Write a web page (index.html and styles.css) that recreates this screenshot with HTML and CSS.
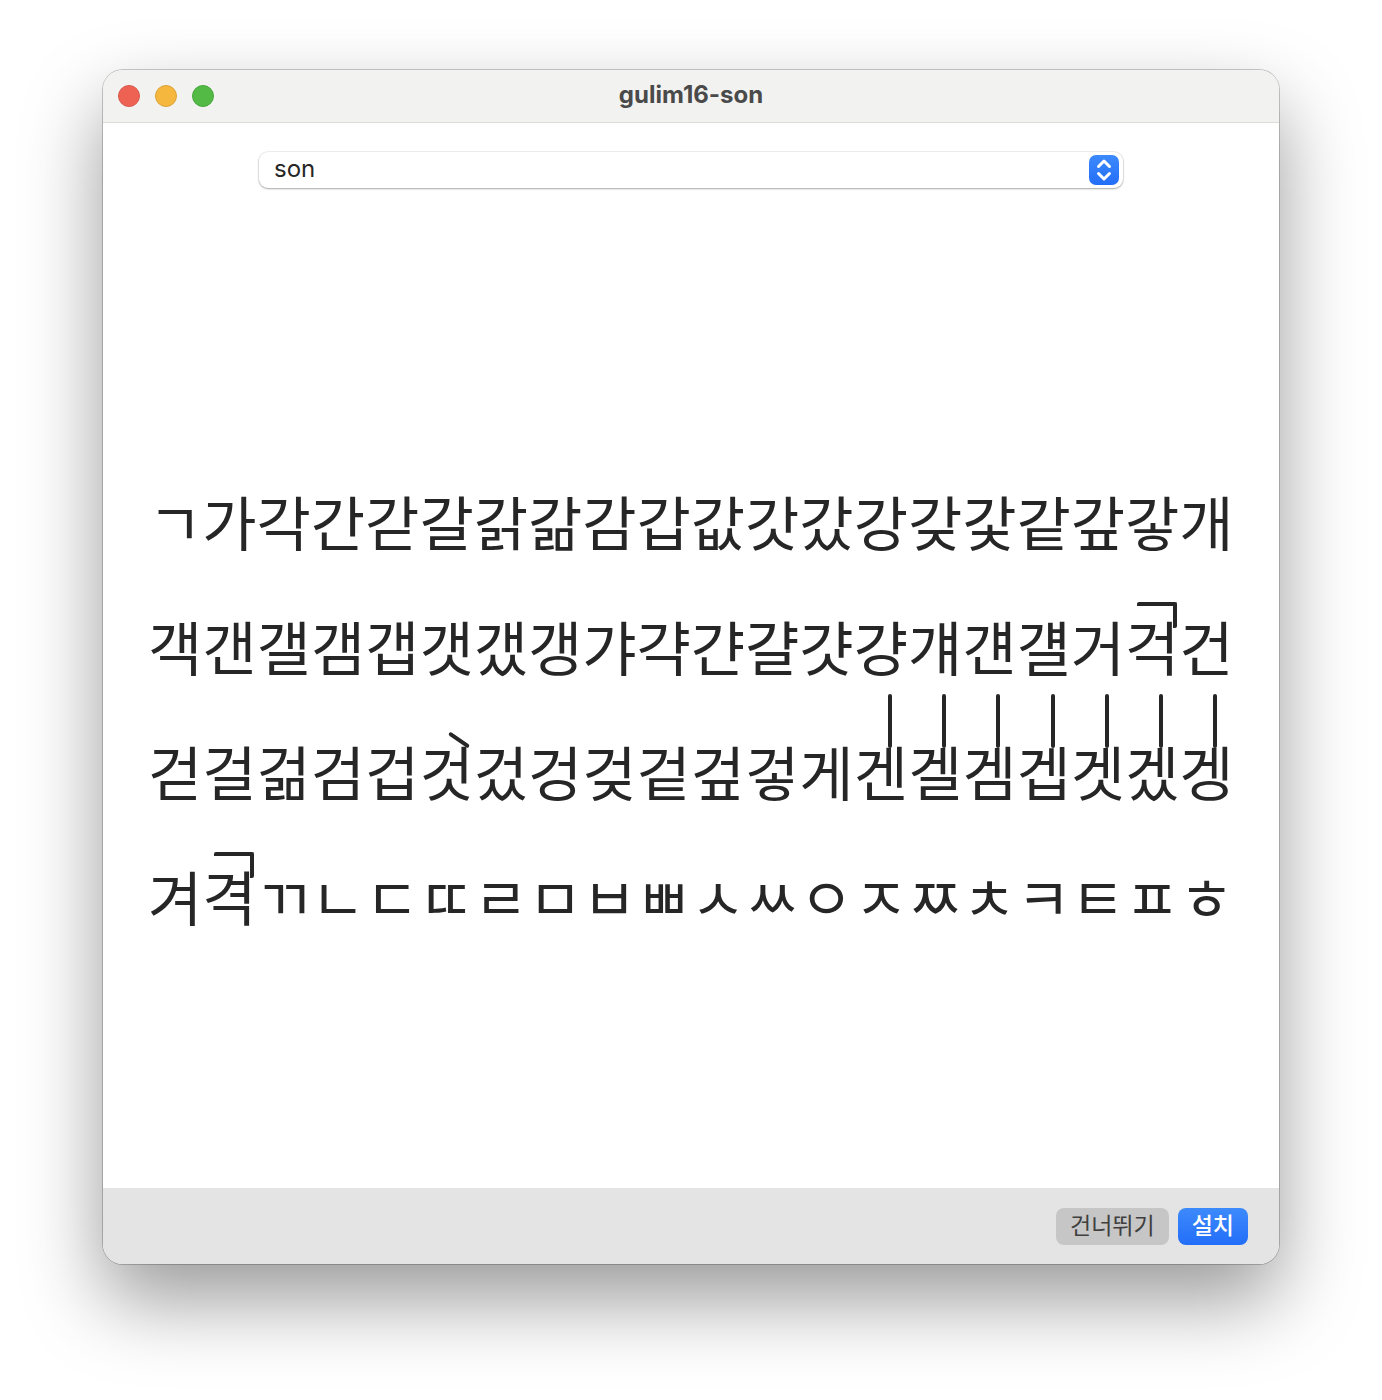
FILE: index.html
```html
<!DOCTYPE html>
<html lang="ko">
<head>
    <meta charset="UTF-8">
    <meta name="viewport" content="width=device-width, initial-scale=1.0">
    <title>gulim16-son</title>
    <link rel="stylesheet" href="styles.css">
</head>
<body>
    <div class="window">
        <header class="titlebar">
            <div class="lights">
                <button class="light close" aria-label="닫기"></button>
                <button class="light minimize" aria-label="최소화"></button>
                <button class="light zoom" aria-label="확대"></button>
            </div>
            <h1>gulim16-son</h1>
        </header>

        <main>
            <div class="picker">
                <select aria-label="서체 스타일">
                    <option>son</option>
                </select>
                <svg class="stepper" viewBox="0 0 30 30" aria-hidden="true">
                    <path d="M9.500 11.500L15 6L20.500 11.500M9.500 18.500L15 24L20.500 18.500"/>
                </svg>
            </div>

            <!-- Font sample, 20 glyphs per line -->
            <p class="sample">
                ㄱ가각간갇갈갉갊감갑값갓갔강갖갗같갚갛개<br>
                객갠갤갬갭갯갰갱갸갹갼걀걋걍걔걘걜거<span class="stray hook">걱</span>건<br>
                걷걸걺검겁<span class="stray tick">것</span>겄겅겆겉겊겋게<span class="stray stem">겐</span><span class="stray stem">겔</span><span class="stray stem">겜</span><span class="stray stem">겝</span><span class="stray stem">겟</span><span class="stray stem">겠</span><span class="stray stem">겡</span><br>
                겨<span class="stray hook">격</span>ㄲㄴㄷㄸㄹㅁㅂㅃㅅㅆㅇㅈㅉㅊㅋㅌㅍㅎ
            </p>
        </main>

        <footer>
            <button class="btn">건너뛰기</button>
            <button class="btn primary">설치</button>
        </footer>
    </div>
</body>
</html>
```
FILE: styles.css
```css
* {
    box-sizing: border-box;
}
body {
    margin: 0;
    min-height: 100vh;
    padding: 70px 103px 136px;
    display: flex;
    background: #fff;
    font-family: Inter, "Noto Sans CJK KR", sans-serif;
    color: #262626;
}
.window {
    flex: 1;
    min-width: 0;
    display: flex;
    flex-direction: column;
    overflow: hidden;
    border-radius: 20px;
    background: #fff;
    box-shadow: 0 0 0 1px rgba(0, 0, 0, 0.2), 0 36px 80px rgba(0, 0, 0, 0.4);
}

/* Title bar */
.titlebar {
    display: grid;
    grid-template-columns: 1fr auto 1fr;
    align-items: center;
    height: 53px;
    padding: 0 15px;
    background: #f2f2f0;
    border-bottom: 1px solid #dcdcda;
}
.titlebar h1 {
    margin: 0;
    padding-bottom: 2px;
    font-size: 24px;
    line-height: 30px;
    font-weight: 700;
    color: #4a4a4a;
}
.lights {
    display: flex;
    gap: 15px;
}
.light {
    width: 22px;
    height: 22px;
    padding: 0;
    border: 1px solid;
    border-radius: 50%;
}
.close {
    background: #ed6253;
    border-color: #d8584a;
}
.minimize {
    background: #f6b73e;
    border-color: #dba137;
}
.zoom {
    background: #53bb45;
    border-color: #47a53a;
}

/* Style drop-down */
main {
    flex: 1;
    display: flex;
    flex-direction: column;
    padding: 29px 43px 0;
}
.picker {
    position: relative;
    margin: 0 113px 40px;
}
.picker select {
    display: block;
    width: 100%;
    height: 36px;
    padding: 0 44px 3px 15px;
    appearance: none;
    border: 0;
    border-radius: 9px;
    background: #fff;
    box-shadow: 0 0 0 1px rgba(0, 0, 0, 0.06), 0 1px 2px rgba(0, 0, 0, 0.3);
    font-family: inherit;
    font-size: 24px;
    color: #262626;
}
.stepper {
    position: absolute;
    top: 3px;
    right: 4px;
    width: 30px;
    height: 30px;
    border-radius: 7px;
    background: linear-gradient(#3d8afc, #236ef8);
    fill: none;
    stroke: #fff;
    stroke-width: 3;
    stroke-linecap: round;
    stroke-linejoin: round;
    pointer-events: none;
}

/* Sample text */
.sample {
    margin: auto 0;
    padding: 0 2px;
    font-family: "Noto Sans CJK KR", sans-serif;
    font-size: 59px;
    line-height: 125px;
    white-space: nowrap;
}
/* Strokes that escape above their glyph */
.stray {
    position: relative;
}
.stray::before {
    content: "";
    position: absolute;
}
.stem::before {
    top: -34px;
    left: 34px;
    width: 4px;
    height: 54px;
    border-radius: 2px;
    background: #262626;
}
.hook::before {
    top: -1px;
    left: 12px;
    width: 36px;
    height: 22px;
    border: solid #262626;
    border-width: 4px 4px 0 0;
    border-radius: 2px;
}
.tick::before {
    top: 10px;
    left: 28px;
    width: 24px;
    height: 4px;
    border-radius: 2px;
    background: #262626;
    transform: rotate(35deg);
}

/* Bottom bar */
footer {
    display: flex;
    justify-content: flex-end;
    align-items: center;
    gap: 9px;
    height: 76px;
    padding: 0 31px;
    background: #e4e4e4;
}
.btn {
    height: 37px;
    padding: 0 14px 5px;
    border: 0;
    border-radius: 8px;
    background: #c6c6c6;
    font-family: "Noto Sans CJK KR", sans-serif;
    font-size: 23px;
    line-height: 32px;
    color: #3f3f3f;
}
.primary {
    background: linear-gradient(#3d8afc, #236ef8);
    color: #fff;
    font-weight: 500;
}
```
